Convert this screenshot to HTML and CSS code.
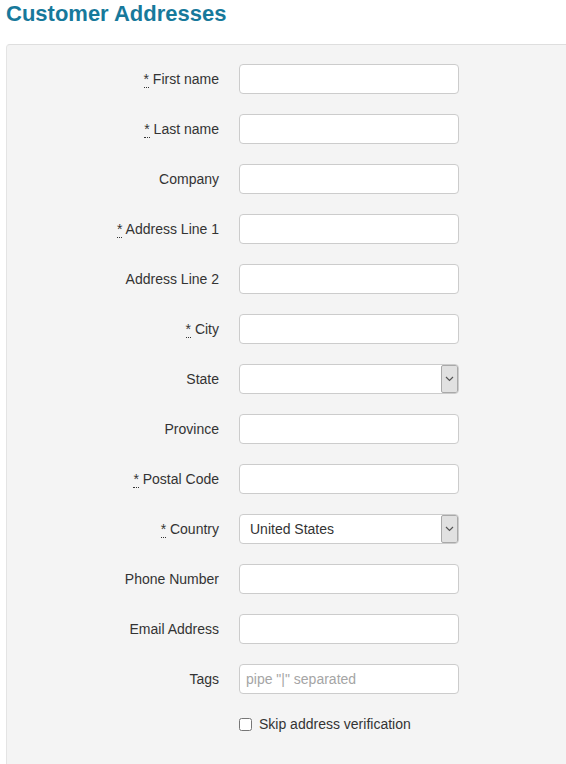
FILE: index.html
```
<!DOCTYPE html>
<html lang="en">

<head>
    <meta charset="UTF-8">
    <title>Customer Addresses</title>
    <link rel="stylesheet" href="styles.css">
</head>

<body>
    <div class="page">
        <h1 class="title">Customer Addresses</h1>

        <div class="panel">
            <form class="addr-form">
                <label class="lbl"><abbr title="required">*</abbr> First name</label>
                <input class="field" type="text">

                <label class="lbl"><abbr title="required">*</abbr> Last name</label>
                <input class="field" type="text">

                <label class="lbl">Company</label>
                <input class="field" type="text">

                <label class="lbl"><abbr title="required">*</abbr> Address Line 1</label>
                <input class="field" type="text">

                <label class="lbl">Address Line 2</label>
                <input class="field" type="text">

                <label class="lbl"><abbr title="required">*</abbr> City</label>
                <input class="field" type="text">

                <label class="lbl">State</label>
                <div class="selectbox">
                    <select class="sel"><option></option></select>
                    <span class="arrow"><svg width="9" height="6" viewBox="0 0 9 6"><path d="M1 1 L4.5 4.5 L8 1" fill="none" stroke="#555" stroke-width="1.2"/></svg></span>
                </div>

                <label class="lbl">Province</label>
                <input class="field" type="text">

                <label class="lbl"><abbr title="required">*</abbr> Postal Code</label>
                <input class="field" type="text">

                <label class="lbl"><abbr title="required">*</abbr> Country</label>
                <div class="selectbox">
                    <select class="sel"><option>United States</option></select>
                    <span class="arrow"><svg width="9" height="6" viewBox="0 0 9 6"><path d="M1 1 L4.5 4.5 L8 1" fill="none" stroke="#555" stroke-width="1.2"/></svg></span>
                </div>

                <label class="lbl">Phone Number</label>
                <input class="field" type="text">

                <label class="lbl">Email Address</label>
                <input class="field" type="text">

                <label class="lbl">Tags</label>
                <input class="field" type="text" placeholder='pipe "|" separated'>

                <div class="check-row">
                    <input type="checkbox" class="chk" id="skip">
                    <label for="skip">Skip address verification</label>
                </div>
            </form>
        </div>
    </div>
</body>

</html>
```

FILE: styles.css
```
* {
    margin: 0;
    padding: 0;
    box-sizing: border-box;
}

body {
    font-family: "Liberation Sans", Arial, sans-serif;
    font-size: 14px;
    color: #333;
    background: #fff;
    overflow: hidden;
}

.page {
    padding-left: 6px;
}

.title {
    font-size: 22px;
    font-weight: bold;
    color: #17799b;
    line-height: 28px;
    margin-bottom: 16px;
}

.panel {
    background-color: #f4f4f4;
    border-top: 1px solid #dedede;
    border-left: 1px solid #e4e4e4;
    border-top-left-radius: 4px;
    margin-right: -20px;
    padding: 19px 0 20px 0;
    min-height: calc(100vh - 44px);
}

.addr-form {
    display: grid;
    grid-template-columns: 212px 220px;
    column-gap: 20px;
    row-gap: 20px;
    align-items: center;
}

.lbl {
    text-align: right;
    line-height: 30px;
}

.lbl abbr {
    text-decoration: none;
    border-bottom: 1px dotted #333;
    cursor: help;
}

.field {
    height: 30px;
    width: 220px;
    border: 1px solid #ccc;
    border-radius: 4px;
    background: #fff;
    padding: 0 6px;
    font-family: inherit;
    font-size: 14px;
    color: #333;
    outline: none;
}

.field::placeholder {
    color: #a5a5a5;
}

.selectbox {
    display: flex;
    height: 30px;
    width: 220px;
    border: 1px solid #ccc;
    border-radius: 4px;
    background: #fff;
    overflow: hidden;
}

.sel {
    flex: 1;
    border: none;
    outline: none;
    background: transparent;
    appearance: none;
    -webkit-appearance: none;
    font-family: inherit;
    font-size: 14px;
    color: #333;
    padding-left: 10px;
}

.arrow {
    width: 17px;
    background: #e1e1e1;
    border: 1px solid #a9a9a9;
    border-radius: 2px;
    display: flex;
    align-items: center;
    justify-content: center;
}

.check-row {
    grid-column: 2;
    display: flex;
    align-items: center;
    gap: 7px;
    margin-top: 2px;
    white-space: nowrap;
}

.chk {
    width: 13px;
    height: 13px;
    margin: 0;
}
```
